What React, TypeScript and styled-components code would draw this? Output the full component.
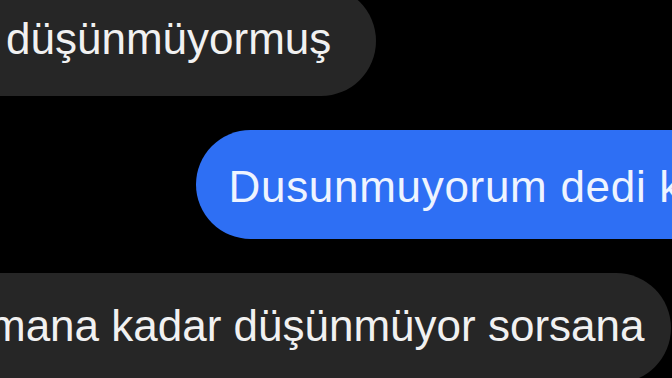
import styled, { createGlobalStyle } from "styled-components";

type Side = "in" | "out";

type Message = {
  id: number;
  side: Side;
  text: string;
  inset: number;
  trail: number;
};

// ─── Styled Components ───────────────────────────────────────────────────────

const GlobalStyle = createGlobalStyle`
  html, body {
    margin: 0;
    padding: 0;
    background: #000;
    overflow: hidden;
  }
  body {
    width: 672px;
    height: 378px;
    font-family: "Liberation Sans", Arial, Helvetica, sans-serif;
    -webkit-font-smoothing: antialiased;
  }
`;

const StyledScreen = styled.div`
  width: 672px;
  height: 378px;
  overflow: hidden;
  background: #000;
`;

// The thread is a crop of a wider chat, so it starts above the window
const StyledThread = styled.div`
  display: flex;
  flex-direction: column;
  gap: 34px;
  margin-top: -14px;
`;

const StyledRow = styled.div<{ $side: Side }>`
  display: flex;
  justify-content: ${({ $side }) => ($side === "in" ? "flex-start" : "flex-end")};
`;

const StyledBubble = styled.div<{ $side: Side; $inset: number; $trail: number }>`
  flex-shrink: 0;
  white-space: nowrap;
  font-size: 44px;
  line-height: 50px;
  border-radius: 56px;
  color: ${({ $side }) => ($side === "in" ? "#f1f1f1" : "#eef4ff")};
  background: ${({ $side }) => ($side === "in" ? "#262626" : "#2e6ff4")};
  letter-spacing: ${({ $side }) => ($side === "in" ? "0" : "0.7px")};
  padding: ${({ $side }) => ($side === "in" ? "28px 0 32px" : "32px 0 27px")};
  padding-left: ${({ $inset }) => $inset}px;
  padding-right: ${({ $trail }) => $trail}px;
  margin-left: ${({ $side }) => ($side === "in" ? "-60px" : "0")};
  margin-right: ${({ $side }) => ($side === "out" ? "-70px" : "0")};
`;

// ─── Data ────────────────────────────────────────────────────────────────────

const MESSAGES: Message[] = [
  { id: 1, side: "in", text: "düşünmüyormuş", inset: 66, trail: 45 },
  { id: 2, side: "out", text: "Dusunmuyorum dedi k", inset: 33, trail: 60 },
  { id: 3, side: "in", text: "mana kadar düşünmüyor sorsana", inset: 49, trail: 27 },
];

// ─── Component ───────────────────────────────────────────────────────────────

const App = () => {
  return (
    <StyledScreen>
      <GlobalStyle />
      <StyledThread>
        {MESSAGES.map((m) => (
          <StyledRow key={m.id} $side={m.side}>
            <StyledBubble $side={m.side} $inset={m.inset} $trail={m.trail}>
              {m.text}
            </StyledBubble>
          </StyledRow>
        ))}
      </StyledThread>
    </StyledScreen>
  );
};

App.displayName = "App";
export default App;
